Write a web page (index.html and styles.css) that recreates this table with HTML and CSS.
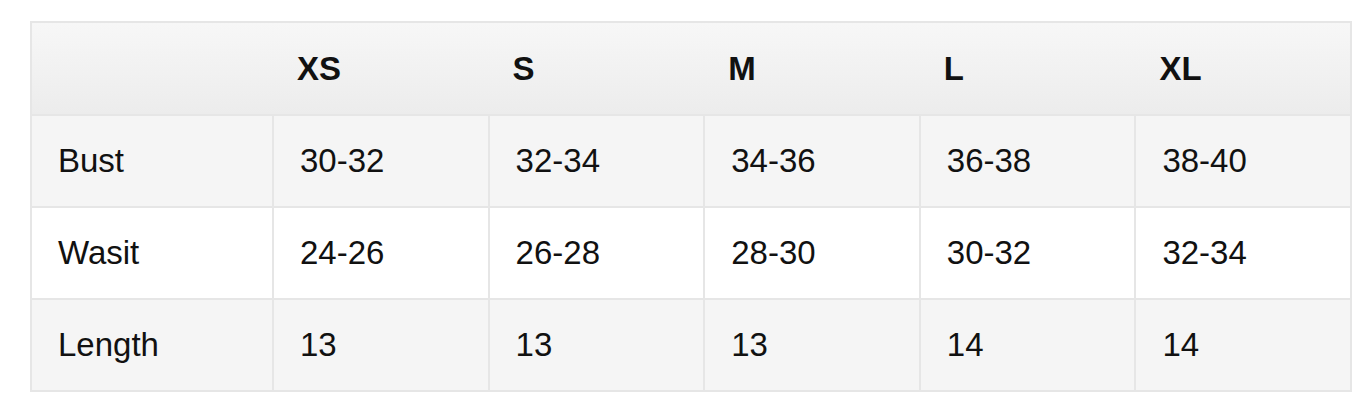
FILE: index.html
```html
<!DOCTYPE html>
<html lang="en">
<head>
<meta charset="utf-8">
<title>Size chart</title>
<link rel="stylesheet" href="styles.css">
</head>
<body>
<div class="wrap">
<table class="size-table">
  <colgroup>
    <col class="col-label">
    <col class="col-size"><col class="col-size"><col class="col-size"><col class="col-size"><col class="col-size">
  </colgroup>
  <thead>
    <tr>
      <th></th><th>XS</th><th>S</th><th>M</th><th>L</th><th>XL</th>
    </tr>
  </thead>
  <tbody>
    <tr class="shade">
      <td>Bust</td><td>30-32</td><td>32-34</td><td>34-36</td><td>36-38</td><td>38-40</td>
    </tr>
    <tr>
      <td>Wasit</td><td>24-26</td><td>26-28</td><td>28-30</td><td>30-32</td><td>32-34</td>
    </tr>
    <tr class="shade">
      <td>Length</td><td>13</td><td>13</td><td>13</td><td>14</td><td>14</td>
    </tr>
  </tbody>
</table>
</div>
</body>
</html>
```
FILE: styles.css
```css
html, body {
  margin: 0;
  padding: 0;
  background: #fff;
}
.wrap {
  padding: 21px 16px 0 30px;
}
.size-table {
  width: 1320px;
  border-collapse: collapse;
  table-layout: fixed;
  font-family: "Liberation Sans", Arial, Helvetica, sans-serif;
  font-size: 33px;
  color: #111;
  border: 2px solid #e6e6e6;
}
.col-label { width: 242px; }
.col-size { width: 215.6px; }
.size-table th {
  text-align: left;
  font-weight: bold;
  padding: 28px 24px 27px;
  line-height: 36px;
  background: linear-gradient(#f7f7f7, #ececec);
  border-bottom: 2px solid #e6e6e6;
}
.size-table td {
  text-align: left;
  padding: 27px 24px 27px 26px;
  line-height: 36px;
  border: 2px solid #e6e6e6;
  background: #fff;
}
.size-table tr.shade td {
  background: #f5f5f5;
}
```
